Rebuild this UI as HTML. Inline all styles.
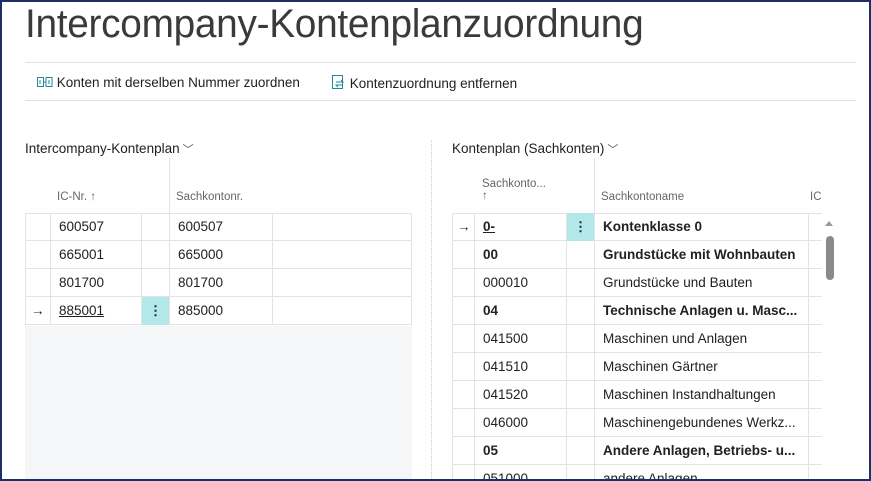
<!DOCTYPE html>
<html><head><meta charset="utf-8"><style>
*{box-sizing:border-box;margin:0;padding:0}
html,body{width:871px;height:481px;overflow:hidden}
body{background:#fff;font-family:"Liberation Sans",sans-serif;color:#212121;position:relative}
.frame{position:absolute;left:0;top:0;width:871px;height:481px;border:2px solid #1b2f6b;z-index:10;pointer-events:none}
.abs{position:absolute;white-space:nowrap}
.title{left:25px;top:2px;font-size:40px;color:#3a3a3a;letter-spacing:-0.3px;transform:scaleX(0.97);transform-origin:left}
.hr{position:absolute;left:25px;width:831px;height:1px;background:#e1e1e1}
.tb{font-size:13.5px;top:75px}
.sec{font-size:13.5px;top:141px}
.hdr{font-size:11.5px;color:#666}
.row{position:absolute;height:28px;border-bottom:1px solid #e3e3e3;font-size:13.5px}
.cell{position:absolute;top:0;height:28px;line-height:28px;border-left:1px solid #e3e3e3;padding-left:8px;overflow:hidden;white-space:nowrap}
.b{font-weight:bold}
.dots{background:#b2e8ea;text-align:center;padding:0;font-weight:bold}
</style></head><body>
<div class="frame"></div>
<div class="abs title">Intercompany-Kontenplanzuordnung</div>
<div class="hr" style="top:62px"></div>
<div class="hr" style="top:100px"></div>
<div class="abs tb" style="left:37px">
<svg width="16" height="12" viewBox="0 0 16 12" style="vertical-align:-1px"><rect x="0.5" y="1.5" width="6" height="9" fill="none" stroke="#1e8a9a"/><rect x="9" y="1.5" width="6" height="9" fill="none" stroke="#1e8a9a"/><path d="M3 4v4M12 4v4M6.5 6h3" stroke="#1e8a9a"/></svg> Konten mit derselben Nummer zuordnen</div>
<div class="abs tb" style="left:331px">
<svg width="15" height="15" viewBox="0 0 15 15" style="vertical-align:-2px"><rect x="1.5" y="0.5" width="10" height="13" fill="none" stroke="#1e8a9a"/><path d="M5 7h7l-2-2M12 10H5l2 2" fill="none" stroke="#1e8a9a"/></svg> Kontenzuordnung entfernen</div>

<div class="abs sec" style="left:25px">Intercompany-Kontenplan<span style="font-size:11px;color:#555"> ﹀</span></div>
<div class="abs sec" style="left:452px">Kontenplan (Sachkonten)<span style="font-size:11px;color:#555"> ﹀</span></div>
<div style="position:absolute;left:431px;top:140px;height:341px;border-left:1px dotted #ccc"></div>

<div style="position:absolute;left:169px;top:158px;width:1px;height:55px;background:#e3e3e3"></div>
<div class="abs hdr" style="left:57px;top:191px">IC-Nr. ↑</div>
<div class="abs hdr" style="left:176px;top:191px">Sachkontonr.</div>
<div style="position:absolute;left:25px;top:213px;width:387px;height:112px;border-top:1px solid #e3e3e3;border-right:1px solid #e3e3e3"></div>
<div style="position:absolute;left:25px;top:326px;width:387px;height:155px;background:#f5f6f8"></div>
<div class="row" style="left:25px;top:213px;width:387px"><div class="cell" style="left:0;width:25px"></div><div class="cell" style="left:25px;width:91px">600507</div><div class="cell" style="left:116px;width:28px"></div><div class="cell" style="left:144px;width:103px">600507</div><div class="cell" style="left:247px;width:140px"></div></div>
<div class="row" style="left:25px;top:241px;width:387px"><div class="cell" style="left:0;width:25px"></div><div class="cell" style="left:25px;width:91px">665001</div><div class="cell" style="left:116px;width:28px"></div><div class="cell" style="left:144px;width:103px">665000</div><div class="cell" style="left:247px;width:140px"></div></div>
<div class="row" style="left:25px;top:269px;width:387px"><div class="cell" style="left:0;width:25px"></div><div class="cell" style="left:25px;width:91px">801700</div><div class="cell" style="left:116px;width:28px"></div><div class="cell" style="left:144px;width:103px">801700</div><div class="cell" style="left:247px;width:140px"></div></div>
<div class="row" style="left:25px;top:297px;width:387px"><div class="cell" style="left:0;width:25px;padding-left:5px">→</div><div class="cell" style="left:25px;width:91px;text-decoration:underline">885001</div><div class="cell dots" style="left:116px;width:28px">⋮</div><div class="cell" style="left:144px;width:103px">885000</div><div class="cell" style="left:247px;width:140px"></div></div>

<div style="position:absolute;left:594px;top:158px;width:1px;height:55px;background:#e3e3e3"></div>
<div class="abs hdr" style="left:482px;top:178px">Sachkonto...<br>↑</div>
<div class="abs hdr" style="left:601px;top:191px">Sachkontoname</div>
<div class="abs hdr" style="left:810px;top:191px;width:12px;overflow:hidden">IC-Nr</div>
<div style="position:absolute;left:452px;top:213px;width:370px;border-top:1px solid #e3e3e3"></div>
<div id="rt" style="position:absolute;left:0;top:0;width:871px;height:481px;overflow:hidden"></div>
<div style="position:absolute;left:822px;top:213px;width:14px;height:268px;background:#fff"></div>
<div class="abs" style="left:825px;top:221px;width:0;height:0;border-left:4px solid transparent;border-right:4px solid transparent;border-bottom:5px solid #999"></div>
<div class="abs" style="left:826px;top:236px;width:8px;height:44px;background:#8a8a8a;border-radius:4px"></div>
<script>
var d=[["→","0-","Kontenklasse 0",1,1],["","00","Grundstücke mit Wohnbauten",1],["","000010","Grundstücke und Bauten"],["","04","Technische Anlagen u. Masc...",1],["","041500","Maschinen und Anlagen"],["","041510","Maschinen Gärtner"],["","041520","Maschinen Instandhaltungen"],["","046000","Maschinengebundenes Werkz..."],["","05","Andere Anlagen, Betriebs- u...",1],["","051000","andere Anlagen"]];
var h="";d.forEach(function(r,i){var b=r[3]?" b":"";h+='<div class="row" style="left:452px;top:'+(213+i*28)+'px;width:370px"><div class="cell" style="left:0;width:22px;padding-left:4px">'+r[0]+'</div><div class="cell'+b+'" style="left:22px;width:92px'+(r[4]?';text-decoration:underline':'')+'">'+r[1]+'</div><div class="cell'+(r[4]?' dots':'')+'" style="left:114px;width:28px">'+(r[4]?'⋮':'')+'</div><div class="cell'+b+'" style="left:142px;width:214px">'+r[2]+'</div><div class="cell" style="left:356px;width:14px"></div></div>';});
document.getElementById("rt").innerHTML=h;
</script>
</body></html>
